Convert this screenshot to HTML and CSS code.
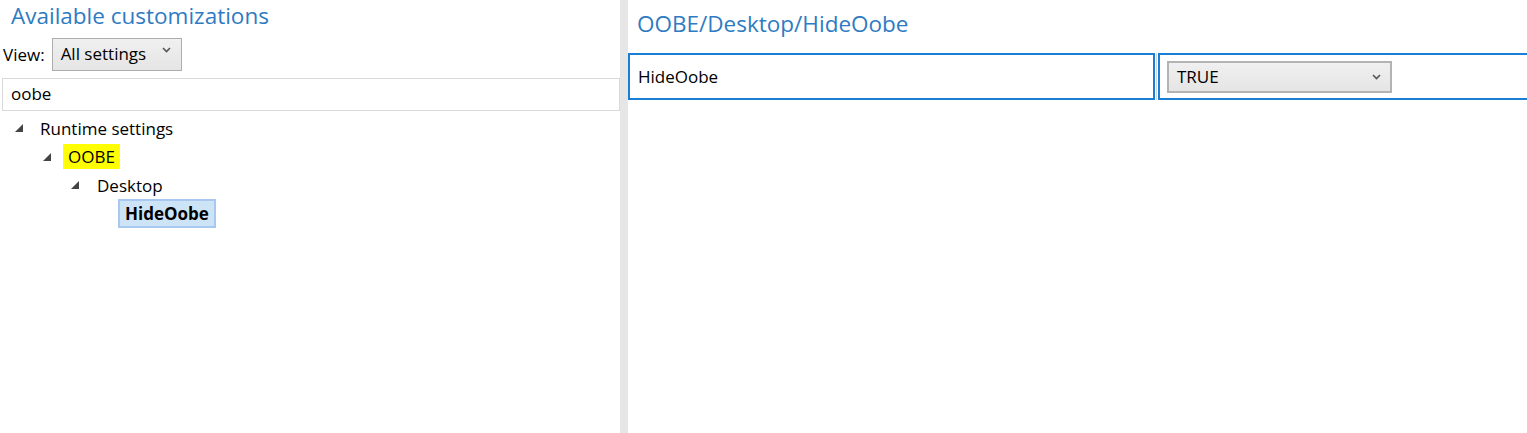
FILE: index.html
```html
<!DOCTYPE html>
<html>
<head>
    <title>Customizations</title>
    <link rel="stylesheet" href="styles.css">
</head>
<body>
    <div class="panel-izq">
        <h1 class="titulo">Available customizations</h1>
        <div class="fila-vista">
            <span class="etiqueta">View:</span>
            <div class="combo combo-vista">
                <span>All settings</span>
                <svg class="flecha" width="9" height="6" viewBox="0 0 9 6"><path d="M1 1 L4.5 4.5 L8 1" fill="none" stroke="#555" stroke-width="1.6"/></svg>
            </div>
        </div>
        <div class="buscador">oobe</div>

        <ul class="arbol">
            <li class="nodo nivel-0"><span class="tri"></span><span class="texto">Runtime settings</span></li>
            <li class="nodo nivel-1"><span class="tri"></span><span class="texto resaltado">OOBE</span></li>
            <li class="nodo nivel-2"><span class="tri"></span><span class="texto">Desktop</span></li>
            <li class="nodo nivel-3"><span class="texto seleccionado">HideOobe</span></li>
        </ul>
    </div>

    <div class="separador"></div>

    <div class="panel-der">
        <h1 class="titulo titulo-der">OOBE/Desktop/HideOobe</h1>
        <div class="fila-ajuste">
            <div class="celda celda-nombre">HideOobe</div>
            <div class="linea"></div>
            <div class="celda celda-valor">
                <div class="combo combo-valor">
                    <span>TRUE</span>
                    <svg class="flecha" width="9" height="6" viewBox="0 0 9 6"><path d="M1 1 L4.5 4.5 L8 1" fill="none" stroke="#555" stroke-width="1.6"/></svg>
                </div>
            </div>
        </div>
    </div>
</body>
</html>
```

FILE: styles.css
```css
body {
    margin: 0;
    font-family: "Open Sans", "Noto Sans", sans-serif;
    font-size: 17px;
    color: #000;
    background: #fff;
    display: flex;
    height: 433px;
    overflow: hidden;
}

.panel-izq {
    width: 620px;
    flex: none;
}

.separador {
    width: 8px;
    flex: none;
    background: #e6e6e6;
}

.panel-der {
    flex: 1;
    min-width: 0;
}

.titulo {
    margin: 0;
    height: 34px;
    line-height: 32px;
    font-size: 22.5px;
    font-weight: normal;
    color: #2f7bc2;
    padding-left: 11px;
}

.titulo-der {
    padding-left: 9px;
    height: 53px;
    line-height: 48px;
}

/* fila de la vista */
.fila-vista {
    display: flex;
    align-items: center;
    gap: 7px;
    padding-left: 3px;
    margin-top: 4px;
}

.combo {
    display: flex;
    align-items: center;
    justify-content: space-between;
    box-sizing: border-box;
    border: 1px solid #adadad;
    background: linear-gradient(#f0f0f0, #e5e5e5);
}

.combo-vista {
    width: 130px;
    height: 33px;
    padding: 0 10px 2px 8px;
}

.combo-vista .flecha {
    margin-top: -8px;
}

.buscador {
    box-sizing: border-box;
    margin: 7px 0 0 2px;
    height: 33px;
    border: 1px solid #d9d9d9;
    padding-left: 8px;
    line-height: 30px;
}

/* arbol */
.arbol {
    list-style: none;
    margin: 3px 0 0;
    padding: 0;
}

.nodo {
    display: flex;
    align-items: center;
    height: 28.5px;
}

.tri {
    width: 0;
    height: 0;
    border-left: 8px solid transparent;
    border-bottom: 8px solid #444;
    margin-right: 17px;
}

.nivel-0 { padding-left: 15px; }
.nivel-1 { padding-left: 43px; }
.nivel-2 { padding-left: 71px; }
.nivel-3 { padding-left: 118px; }

.nivel-1 .tri { margin-right: 12px; }
.nivel-2 .tri { margin-right: 18px; }

.resaltado {
    background: #ffff00;
    padding: 1px 5px;
    line-height: 23px;
}

.seleccionado {
    font-weight: bold;
    background: #cde4f7;
    border: 2px solid #a8c8ef;
    padding: 0 5px;
    line-height: 25px;
}

/* fila de ajuste */
.fila-ajuste {
    display: flex;
    height: 47px;
}

.celda {
    box-sizing: border-box;
    border: 2px solid #1a7fd4;
    height: 47px;
    display: flex;
    align-items: center;
}

.celda-nombre {
    width: 527px;
    padding-left: 8px;
}

.linea {
    width: 1px;
    margin: 0 1px;
    background: #d6d6d6;
}

.celda-valor {
    flex: 1;
    border-right: none;
    padding-left: 7px;
}

.combo-valor {
    width: 225px;
    height: 32px;
    border: 2px solid #b3b3b3;
    padding: 0 9px 0 8px;
}
```
